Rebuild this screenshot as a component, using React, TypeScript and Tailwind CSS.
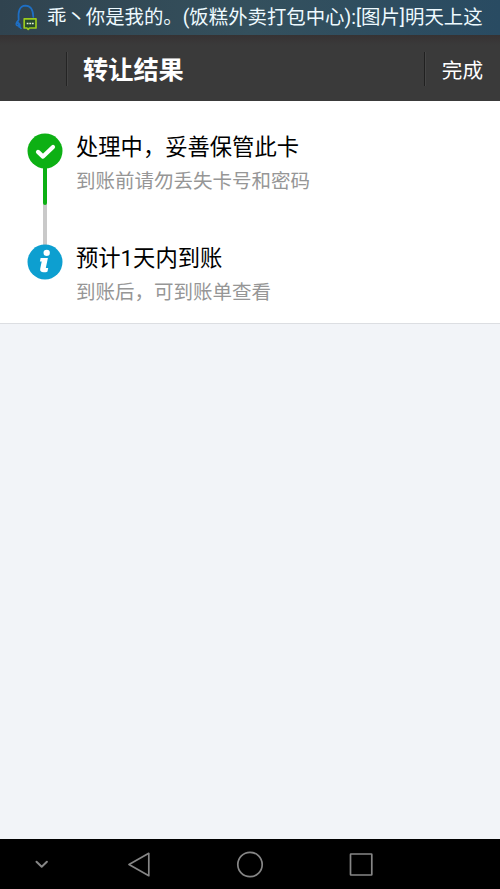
import type { ReactNode } from "react";

function ChatIcon() {
  return (
    <svg width="24" height="27" viewBox="0 0 24 27" fill="none" className="shrink-0">
      <path
        d="M7 24.400c-1.300-.8-1.800-2-1.600-3.600-1.300 1-2.600 1-3 0-.5-1.600.8-3.400 2.300-5C3.800 8 5.400 1.900 11.400 1.700c5.600 0 7.700 4.500 7.900 11.300"
        stroke="#1e6fc4"
        strokeWidth="1.700"
        strokeLinecap="round"
        strokeLinejoin="round"
      />
      <path d="M3.600 18.500l1.700 2v2" stroke="#1e6fc4" strokeWidth="2.400" strokeLinecap="round" />
      <path d="M10.200 14.800h11.800v9.200h-6.500l-1.300 1.400-1.300-1.400h-2.700z" fill="#26482f" stroke="#9acb1e" strokeWidth="1.700" strokeLinejoin="round" />
      <path d="M12.700 19.500h1.800M15.300 19.500h1.800M17.900 19.500h1.800" stroke="#e4f2d0" strokeWidth="1.600" />
    </svg>
  );
}

function CheckBadge() {
  return (
    <svg width="36" height="36" viewBox="0 0 36 36" fill="none">
      <circle cx="18" cy="18" r="17.500" fill="#0db014" />
      <path d="M11 18.900l5 4.700 10-9.600" stroke="#fff" strokeWidth="4.200" strokeLinecap="round" strokeLinejoin="round" />
    </svg>
  );
}

function InfoBadge() {
  return (
    <svg width="36" height="36" viewBox="0 0 36 36" fill="none">
      <circle cx="18" cy="18" r="17.500" fill="#0d9fd0" />
      <circle cx="19.700" cy="8.900" r="3.200" fill="#fff" />
      <path d="M13.600 13.900h7.300l-2.100 10h2.400l-.7 3.500c-1 .6-2.500.9-3.900.9-2.600 0-3.900-1.300-3.400-3.500l1.500-7.400h-1.800z" fill="#fff" />
    </svg>
  );
}

function Step({ icon, title, note }: { icon: ReactNode; title: string; note: string }) {
  return (
    <div className="flex gap-[13px]">
      <div className="h-9 w-9 shrink-0">{icon}</div>
      <div className="-mt-px">
        <h2 className="text-[22.3px] leading-[30px] text-black">{title}</h2>
        <p className="mt-[5px] text-[19.5px] leading-[30px] text-[#969696]">{note}</p>
      </div>
    </div>
  );
}

export default function App() {
  return (
    <div className="flex h-[889px] w-[500px] flex-col overflow-hidden bg-[#f2f4f8] font-[Roboto,'Noto_Sans_CJK_SC',sans-serif]">
      <div className="flex h-[35px] shrink-0 items-center bg-linear-to-r from-[#30434f] via-[#34505d] to-[#294b62] pl-[14px]">
        <ChatIcon />
        <span className="ml-[9px] text-[19.4px] leading-[30px] whitespace-nowrap text-[#eefaff]">
          乖丶你是我的。(饭糕外卖打包中心):[图片]明天上这
        </span>
      </div>

      <header className="flex h-[66px] shrink-0 items-center bg-linear-to-b from-[#363233] to-[#3a3a3a] to-15% pt-px">
        <div className="ml-[66px] h-[34px] w-[2px] border-l border-[#242424] bg-[#454545]" />
        <h1 className="mt-[5px] ml-[15px] text-[25.2px] leading-[36px] font-bold text-white">转让结果</h1>
        <div className="ml-auto h-[34px] w-[2px] border-l border-[#202020] bg-[#454545]" />
        <button className="mt-[5px] mr-[17px] ml-[16px] text-[20.6px] leading-[30px] text-white">完成</button>
      </header>

      <section className="relative h-[223px] shrink-0 border-b border-[#dcdee2] bg-white pt-8 pl-[27px]">
        <div className="absolute top-[60px] left-[43px] h-[90px] w-1 bg-[#c9c9c9]">
          <div className="h-[44px] rounded-b-sm bg-[#0db014]" />
        </div>
        <div className="relative flex flex-col gap-[47px]">
          <Step icon={<CheckBadge />} title="处理中，妥善保管此卡" note="到账前请勿丢失卡号和密码" />
          <Step icon={<InfoBadge />} title="预计1天内到账" note="到账后，可到账单查看" />
        </div>
      </section>

      <nav className="mt-auto flex h-[50px] shrink-0 items-center bg-black">
        <svg width="500" height="50" viewBox="0 0 500 50" fill="none" stroke="#868686" strokeWidth="1.700" strokeLinejoin="round">
          <path d="M36.500 22.800l5.200 5 5.200-5" strokeWidth="2" strokeLinecap="round" />
          <path d="M148.800 14.300v22.400l-19.800-11.200z" />
          <circle cx="250" cy="25.500" r="12.200" />
          <rect x="350.500" y="15" width="21.300" height="21" rx="0.500" />
        </svg>
      </nav>
    </div>
  );
}
